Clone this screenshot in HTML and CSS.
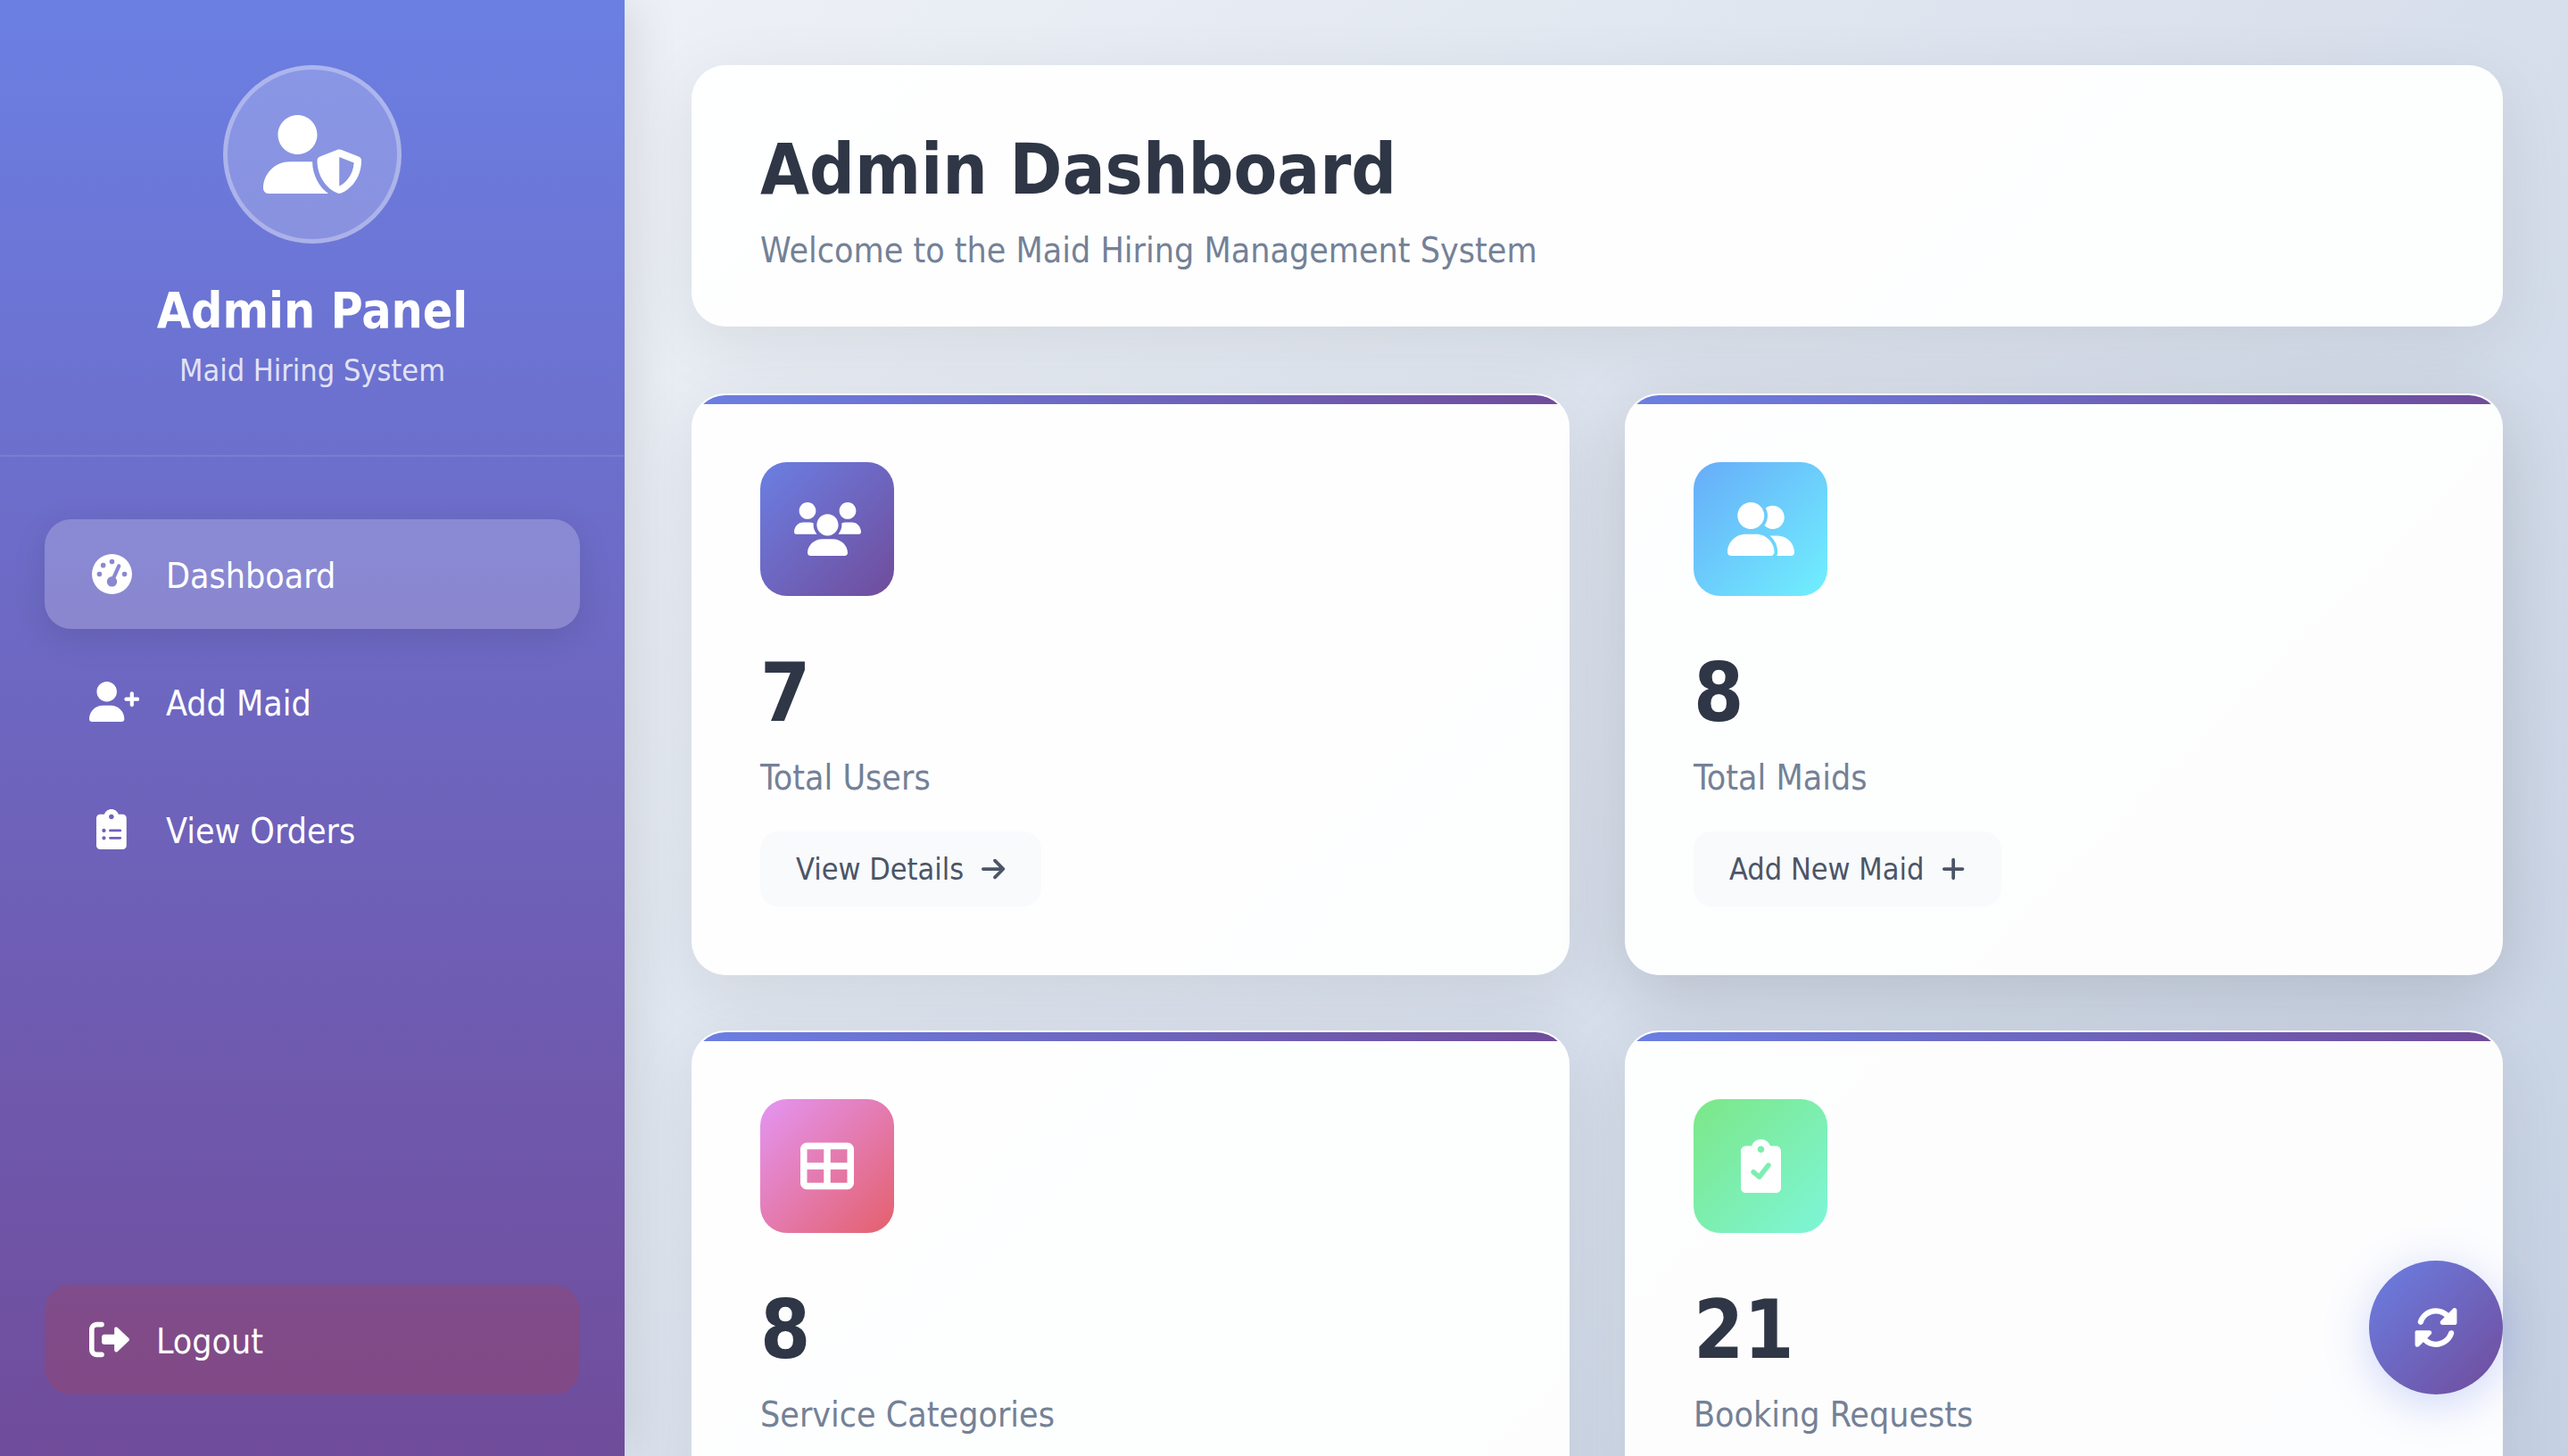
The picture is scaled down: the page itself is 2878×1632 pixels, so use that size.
FILE: index.html
```html
<!DOCTYPE html>
<html lang="en">
<head>
<meta charset="utf-8">
<meta name="viewport" content="width=device-width, initial-scale=1">
<title>Admin Dashboard</title>
<link rel="stylesheet" href="styles.css">
</head>
<body>
<div class="layout">
  <aside class="sidebar">
    <div class="profile">
      <div class="avatar">
        <svg class="avatar-icon" viewBox="0 0 640 512" aria-hidden="true"><path d="M622.3 271.1l-115.2-45.01c-4.125-1.629-12.62-3.754-22.25 0L369.8 271.1C359 275.2 352 285.1 352 295.1c0 111.6 68.75 188.8 132.9 213.9c9.625 3.75 18 1.625 22.25 0C558.4 489.9 640 420.5 640 295.1C640 285.1 633 275.2 622.3 271.1zM496 462.4V273.2l95.5 37.38C585.9 397.8 530.6 446 496 462.4zM224 256c70.7 0 128-57.31 128-128S294.7 0 224 0C153.3 0 96 57.31 96 128S153.3 256 224 256zM320.7 304.7C306.5 303.1 290.8 304 274.7 304H173.3C77.61 304 0 381.6 0 477.3C0 496.5 15.52 512 34.66 512h378.7c3.625 0 7.25-.5 10.5-1.5C367.5 473.1 320 388.9 320.7 304.7z"/></svg>
      </div>
      <h2 class="profile-name">Admin Panel</h2>
      <p class="profile-note">Maid Hiring System</p>
    </div>
    <nav class="nav">
      <a class="nav-item nav-item-active" href="#dashboard" aria-current="page">
        <span class="nav-icon"><svg class="nav-glyph" viewBox="0 0 512 512" aria-hidden="true"><path fill-rule="evenodd" d="M0 256a256 256 0 1 1 512 0A256 256 0 1 1 0 256zM288 96a32 32 0 1 0 -64 0 32 32 0 1 0 64 0zM256 416c35.3 0 64-28.7 64-64c0-17.4-6.9-33.1-18.1-44.6L366 161.7c5.3-12.1-.2-26.3-12.3-31.6s-26.3 .2-31.6 12.3L257.9 288c-.6 0-1.3 0-1.9 0c-35.3 0-64 28.7-64 64s28.7 64 64 64zM176 144a32 32 0 1 0 -64 0 32 32 0 1 0 64 0zM96 288a32 32 0 1 0 0-64 32 32 0 1 0 0 64zm352-32a32 32 0 1 0 -64 0 32 32 0 1 0 64 0z"/></svg></span>
        <span class="nav-label">Dashboard</span>
      </a>
      <a class="nav-item" href="#add-maid">
        <span class="nav-icon nav-icon-wide"><svg class="nav-glyph" viewBox="0 0 640 512" aria-hidden="true"><path d="M224 256c70.7 0 128-57.31 128-128S294.7 0 224 0C153.3 0 96 57.31 96 128S153.3 256 224 256zM274.7 304H173.3C77.61 304 0 381.6 0 477.3C0 496.5 15.52 512 34.66 512h378.7C432.5 512 448 496.5 448 477.3C448 381.6 370.4 304 274.7 304zM616 200h-48v-48C568 138.8 557.3 128 544 128s-24 10.75-24 24v48h-48C458.8 200 448 210.8 448 224s10.75 24 24 24h48v48C520 309.3 530.8 320 544 320s24-10.75 24-24v-48h48C629.3 248 640 237.3 640 224S629.3 200 616 200z"/></svg></span>
        <span class="nav-label">Add Maid</span>
      </a>
      <a class="nav-item" href="#orders">
        <span class="nav-icon"><svg class="nav-glyph" viewBox="0 0 384 512" aria-hidden="true"><path d="M336 64h-53.88C268.9 26.8 233.7 0 192 0S115.1 26.8 101.9 64H48C21.5 64 0 85.48 0 112v352C0 490.5 21.5 512 48 512h288c26.5 0 48-21.48 48-48v-352C384 85.48 362.5 64 336 64zM96 392c-13.25 0-24-10.75-24-24S82.75 344 96 344s24 10.75 24 24S109.3 392 96 392zM96 296c-13.25 0-24-10.75-24-24S82.75 248 96 248S120 258.8 120 272S109.3 296 96 296zM192 64c17.67 0 32 14.33 32 32c0 17.67-14.33 32-32 32S160 113.7 160 96C160 78.33 174.3 64 192 64zM304 384h-128C167.2 384 160 376.8 160 368C160 359.2 167.2 352 176 352h128c8.801 0 16 7.199 16 16C320 376.8 312.8 384 304 384zM304 288h-128C167.2 288 160 280.8 160 272C160 263.2 167.2 256 176 256h128C312.8 256 320 263.2 320 272C320 280.8 312.8 288 304 288z"/></svg></span>
        <span class="nav-label">View Orders</span>
      </a>
    </nav>
    <div class="sidebar-footer">
      <a class="nav-item logout" href="#logout">
        <svg class="nav-glyph" viewBox="0 0 512 512" aria-hidden="true"><path d="M96 480h64C177.7 480 192 465.7 192 448S177.7 416 160 416H96c-17.67 0-32-14.33-32-32V128c0-17.67 14.33-32 32-32h64C177.7 96 192 81.67 192 64S177.7 32 160 32H96C42.98 32 0 74.98 0 128v256C0 437 42.98 480 96 480zM504.8 238.5l-144.1-136c-6.975-6.578-17.2-8.375-26-4.594c-8.803 3.797-14.51 12.47-14.51 22.05l-.0918 72l-128-.001c-17.69 0-32.02 14.33-32.02 32v64c0 17.67 14.34 32 32.02 32l128 .001l.0918 71.1c0 9.578 5.707 18.25 14.51 22.05c8.803 3.781 19.03 1.984 26-4.594l144.1-136C514.4 264.4 514.4 247.6 504.8 238.5z"/></svg>
        <span class="nav-label">Logout</span>
      </a>
    </div>
  </aside>

  <main class="main">
    <header class="page-header">
      <h1 class="page-title">Admin Dashboard</h1>
      <p class="page-subtitle">Welcome to the Maid Hiring Management System</p>
    </header>

    <section class="stats">
      <article class="card">
        <div class="tile tile-users"><svg class="tile-glyph" viewBox="0 0 640 512" aria-hidden="true"><path d="M319.9 320c57.41 0 103.1-46.56 103.1-104c0-57.44-46.54-104-103.1-104c-57.41 0-103.1 46.56-103.1 104C215.9 273.4 262.5 320 319.9 320zM369.9 352H270.1C191.6 352 128 411.7 128 485.3C128 500.1 140.7 512 156.4 512h327.2C499.3 512 512 500.1 512 485.3C512 411.7 448.4 352 369.9 352zM512 160c44.18 0 80-35.82 80-80S556.2 0 512 0c-44.18 0-80 35.82-80 80S467.8 160 512 160zM183.9 216c0-5.449 .9824-10.63 1.609-15.91C174.6 194.1 162.6 192 149.9 192H88.08C39.44 192 0 233.8 0 285.3C0 295.6 7.887 304 17.62 304h199.5C196.7 280.2 183.9 249.7 183.9 216zM128 160c44.18 0 80-35.82 80-80S172.2 0 128 0C83.82 0 48 35.82 48 80S83.82 160 128 160zM551.9 192h-61.84c-12.8 0-24.88 3.037-35.86 8.24C454.8 205.5 455.8 210.6 455.8 216c0 33.71-12.78 64.21-33.16 88h199.7C632.1 304 640 295.6 640 285.3C640 233.8 600.6 192 551.9 192z"/></svg></div>
        <p class="count">7</p>
        <p class="label">Total Users</p>
        <a class="action" href="#users">View Details <svg class="action-glyph" viewBox="0 0 448 512" aria-hidden="true"><path d="M438.6 278.6c12.5-12.5 12.5-32.8 0-45.3l-160-160c-12.5-12.5-32.8-12.5-45.3 0s-12.5 32.8 0 45.3L338.8 224 32 224c-17.7 0-32 14.3-32 32s14.3 32 32 32l306.7 0L233.4 393.4c-12.5 12.5-12.5 32.8 0 45.3s32.8 12.5 45.3 0l160-160z"/></svg></a>
      </article>

      <article class="card card-raised">
        <div class="tile tile-maids"><svg class="tile-glyph" viewBox="0 0 640 512" aria-hidden="true"><path d="M224 256c70.7 0 128-57.31 128-128S294.7 0 224 0C153.3 0 96 57.31 96 128S153.3 256 224 256zM274.7 304H173.3C77.61 304 0 381.6 0 477.3C0 496.5 15.52 512 34.66 512h378.7C432.5 512 448 496.5 448 477.3C448 381.6 370.4 304 274.7 304zM479.1 320h-73.85C451.2 357.7 480 414.1 480 477.3C480 490.1 476.2 501.9 470 512h138C625.7 512 640 497.6 640 479.1C640 391.6 568.4 320 479.1 320zM432 256C493.9 256 544 205.9 544 144S493.9 32 432 32c-25.11 0-48.04 8.555-66.72 22.51C376.8 76.63 384 101.4 384 128c0 35.52-11.93 68.14-31.59 94.71C372.7 243.2 400.8 256 432 256z"/></svg></div>
        <p class="count">8</p>
        <p class="label">Total Maids</p>
        <a class="action" href="#add-maid">Add New Maid <svg class="action-glyph" viewBox="0 0 448 512" aria-hidden="true"><path d="M432 256c0 17.69-14.33 32.01-32 32.01H256v144c0 17.69-14.33 31.99-32 31.99s-32-14.3-32-31.99v-144H48c-17.67 0-32-14.32-32-32.01s14.33-31.99 32-31.99H192v-144c0-17.69 14.33-32.01 32-32.01s32 14.32 32 32.01v144h144C417.7 224 432 238.3 432 256z"/></svg></a>
      </article>

      <article class="card">
        <div class="tile tile-categories"><svg class="tile-glyph" viewBox="0 0 512 512" aria-hidden="true"><path fill-rule="evenodd" d="M448 32C483.3 32 512 60.65 512 96V416C512 451.3 483.3 480 448 480H64C28.65 480 0 451.3 0 416V96C0 60.65 28.65 32 64 32H448zM448 96H288V224H448V96zM448 288H288V416H448V288zM224 224V96H64V224H224zM64 416H224V288H64V416z"/></svg></div>
        <p class="count">8</p>
        <p class="label">Service Categories</p>
      </article>

      <article class="card">
        <div class="tile tile-bookings"><svg class="tile-glyph" viewBox="0 0 384 512" aria-hidden="true"><path d="M336 64h-53.88C268.9 26.8 233.7 0 192 0S115.1 26.8 101.9 64H48C21.5 64 0 85.48 0 112v352C0 490.5 21.5 512 48 512h288c26.5 0 48-21.48 48-48v-352C384 85.48 362.5 64 336 64zM192 64c17.67 0 32 14.33 32 32s-14.33 32-32 32S160 113.7 160 96S174.3 64 192 64zM282.9 262.8l-88 112c-4.047 5.156-10.02 8.438-16.53 9.062C177.6 383.1 176.8 384 176 384c-5.703 0-11.25-2.031-15.62-5.781l-56-48c-10.06-8.625-11.22-23.77-2.594-33.84c8.609-10.06 23.77-11.22 33.84-2.594l36.98 31.69l72.52-92.28c8.188-10.44 23.3-12.22 33.7-4.062C289.3 237.3 291.1 252.4 282.9 262.8z"/></svg></div>
        <p class="count">21</p>
        <p class="label">Booking Requests</p>
      </article>
    </section>
  </main>
</div>

<button class="refresh" type="button" aria-label="Refresh">
  <svg class="refresh-glyph" viewBox="0 0 512 512" aria-hidden="true"><path d="M449.9 39.96l-48.5 48.53C362.5 53.19 311.4 32 256 32C161.5 32 78.59 92.34 49.58 182.2c-5.438 16.81 3.797 34.88 20.61 40.28c16.97 5.5 34.86-3.812 40.3-20.59C130.9 138.5 189.4 96 256 96c37.96 0 73 14.18 100.2 37.8L311.1 178C295.1 194.8 306.8 223.4 330.4 224h146.9C487.7 223.7 496 215.3 496 204.9V59.04C496 34.99 466.9 22.95 449.9 39.96zM441.8 289.6c-16.94-5.438-34.88 3.812-40.3 20.59C381.1 373.5 322.6 416 256 416c-37.96 0-73-14.18-100.2-37.8L200 334C216.9 317.2 205.2 288.6 181.6 288H34.66C24.32 288.3 16 296.6 16 306.1v145.9c0 24.04 29.07 36.08 46.07 19.07l48.5-48.53C149.5 459.8 200.6 480 255.1 480c94.45 0 177.4-60.34 206.4-150.2C467.9 313 458.6 294.1 441.8 289.6z"/></svg>
</button>
</body>
</html>
```
FILE: styles.css
```css
* {
  box-sizing: border-box;
  margin: 0;
  padding: 0;
}

body {
  font-family: "DejaVu Sans Condensed", Tahoma, "DejaVu Sans", sans-serif;
  background: linear-gradient(135deg, #f5f7fa 0%, #c3cfe2 100%) no-repeat;
  background-size: 100% 115vh;
  color: #2f3646;
}

svg {
  display: block;
  fill: currentColor;
  flex: none;
}

.layout {
  display: flex;
  height: 100vh;
  overflow: hidden;
}

/* Sidebar */

.sidebar {
  flex: 0 0 700px;
  display: flex;
  flex-direction: column;
  background: linear-gradient(180deg, #6b7fe3 0%, #704c9b 100%);
  box-shadow: 10px 0 50px rgba(0, 0, 0, 0.1);
  color: #fff;
}

.profile {
  display: flex;
  flex-direction: column;
  align-items: center;
  padding: 73px 50px 74px;
  border-bottom: 2px solid rgba(255, 255, 255, 0.1);
}

.avatar {
  display: flex;
  align-items: center;
  justify-content: center;
  width: 200px;
  height: 200px;
  margin-bottom: 42px;
  border: 5px solid rgba(255, 255, 255, 0.3);
  border-radius: 50%;
  background: rgba(255, 255, 255, 0.2);
}

.avatar-icon {
  height: 88px;
}

.profile-name {
  margin-bottom: 13px;
  font-size: 55px;
  line-height: 66px;
}

.profile-note {
  font-size: 34px;
  line-height: 42px;
  opacity: 0.8;
}

.nav {
  flex: 1;
  display: flex;
  flex-direction: column;
  gap: 20px;
  padding: 70px 50px;
}

.nav-item {
  display: flex;
  align-items: center;
  gap: 36px;
  padding: 36px 50px;
  border-radius: 30px;
  color: #fff;
  font-size: 39px;
  line-height: 47px;
  text-decoration: none;
}

.nav-item-active {
  background: rgba(255, 255, 255, 0.2);
  box-shadow: 0 10px 38px rgba(0, 0, 0, 0.1);
}

.nav-icon {
  display: flex;
  justify-content: center;
  width: 50px;
}

.nav-icon-wide {
  justify-content: flex-start;
}

.nav-glyph {
  height: 45px;
}

.nav-label {
  padding-top: 4px;
}

.sidebar-footer {
  padding: 0 50px 69px;
}

.logout {
  gap: 30px;
  background: rgba(202, 57, 40, 0.2);
}

/* Main column */

.main {
  flex: 1;
  min-width: 0;
  padding: 73px 73px 73px 75px;
}

.page-header {
  margin-bottom: 75px;
  padding: 70px 77px 61px;
  border-radius: 38px;
  background: rgba(255, 255, 255, 0.95);
  box-shadow: 0 20px 80px rgba(0, 0, 0, 0.08);
}

.page-title {
  margin-bottom: 20px;
  font-size: 79px;
  line-height: 94px;
}

.page-subtitle,
.label {
  color: #748196;
  font-size: 39px;
  line-height: 48px;
}

.stats {
  display: grid;
  grid-template-columns: repeat(2, 1fr);
  grid-auto-rows: 1fr;
  gap: 62px;
}

.card {
  position: relative;
  overflow: hidden;
  padding: 75px;
  border: 2px solid rgba(255, 255, 255, 0.2);
  border-radius: 38px;
  background: rgba(255, 255, 255, 0.95);
  box-shadow: 0 20px 80px rgba(0, 0, 0, 0.08);
}

.card-raised {
  box-shadow: 0 20px 80px rgba(0, 0, 0, 0.14);
}

.card::before {
  content: "";
  position: absolute;
  top: 0;
  left: 0;
  right: 0;
  height: 10px;
  background: linear-gradient(90deg, #6b7fe3, #704c9b);
}

.tile {
  display: flex;
  align-items: center;
  justify-content: center;
  width: 150px;
  height: 150px;
  margin-bottom: 64px;
  border-radius: 30px;
  color: #fff;
}

.tile-glyph {
  height: 60px;
}

.tile-users {
  background: linear-gradient(135deg, #6b7fe3, #704c9b);
}

.tile-maids {
  background: linear-gradient(135deg, #67acf9, #70f0fe);
}

.tile-categories {
  background: linear-gradient(135deg, #e495f4, #e4606b);
}

.tile-bookings {
  background: linear-gradient(135deg, #7ce787, #7df6d8);
}

.count {
  margin-bottom: 26px;
  font-size: 90px;
  font-weight: 700;
  line-height: 90px;
}

.action {
  display: inline-flex;
  align-items: center;
  gap: 20px;
  margin-top: 36px;
  padding: 21px 40px;
  border-radius: 20px;
  background: #f8fafc;
  color: #4c5567;
  font-size: 34px;
  line-height: 42px;
  text-decoration: none;
}

.action-glyph {
  height: 30px;
}

.refresh {
  position: fixed;
  right: 73px;
  bottom: 69px;
  display: flex;
  align-items: center;
  justify-content: center;
  width: 150px;
  height: 150px;
  border: 0;
  border-radius: 50%;
  background: linear-gradient(135deg, #6b7fe3, #704c9b);
  box-shadow: 0 10px 50px rgba(102, 126, 234, 0.3);
  color: #fff;
  cursor: pointer;
}

.refresh-glyph {
  height: 50px;
}
```
